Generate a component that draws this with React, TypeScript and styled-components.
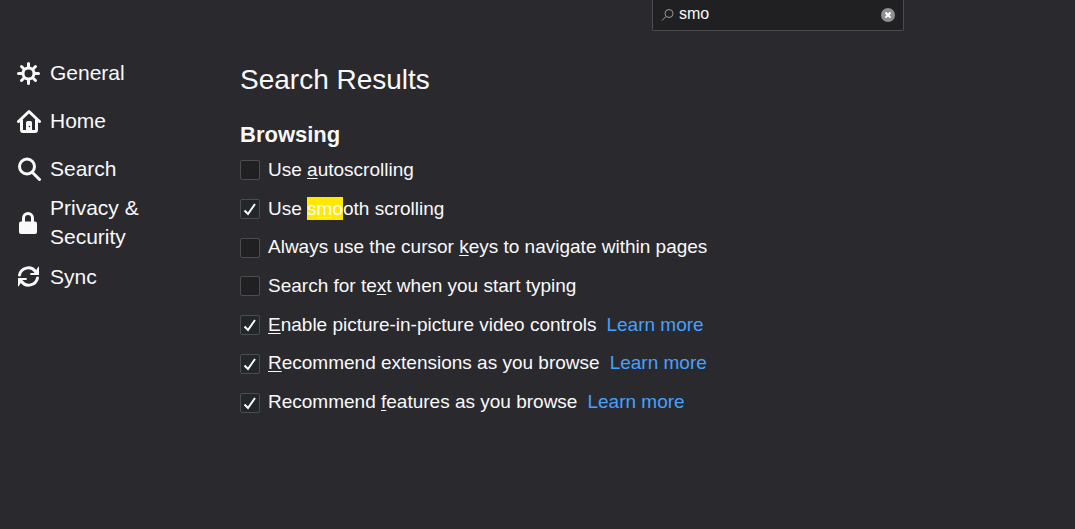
import React from "react";
import styled, { createGlobalStyle } from "styled-components";

const GlobalStyle = createGlobalStyle`
  * { box-sizing: border-box; }
  body {
    margin: 0;
    background: #2a2a2e;
    color: #f9f9fa;
    font-family: "Liberation Sans", Arial, sans-serif;
    font-size: 19px;
    line-height: 29px;
  }
`;

const Page = styled.div`
  display: grid;
  grid-template-columns: 160px minmax(0, 664px);
  column-gap: 80px;
`;

const Nav = styled.nav`
  display: flex;
  flex-direction: column;
  padding: 48px 0 0 17px;
`;

const NavItem = styled.a`
  display: flex;
  align-items: center;
  gap: 9px;
  min-height: 48px;
  padding: 1px 0;
  color: inherit;
  font-size: 21px;
  text-decoration: none;
`;

const NavIcon = styled.svg`
  flex: none;
  width: 24px;
  height: 26px;
  fill: none;
  stroke: #f9f9fa;
  stroke-width: 3;
  stroke-linecap: round;
  stroke-linejoin: round;
`;

const Main = styled.main`
  display: flex;
  flex-direction: column;
`;

const SearchBox = styled.div`
  display: flex;
  align-items: center;
  align-self: flex-end;
  width: 252px;
  max-width: 100%;
  height: 31px;
  padding: 0 8px;
  gap: 4px;
  background: #202022;
  border: 1px solid #4c4c4f;
  border-top: 0;
  border-radius: 0 0 2px 2px;
`;

const SearchInput = styled.input`
  flex: 1;
  min-width: 0;
  height: 24px;
  padding: 0 0 2px;
  border: 0;
  outline: 0;
  background: transparent;
  color: #f9f9fa;
  font: 16px "Liberation Sans", Arial, sans-serif;
`;

const ClearButton = styled.button`
  display: flex;
  padding: 0;
  border: 0;
  background: none;
`;

const Title = styled.h1`
  margin: 32px 0 0;
  font-size: 28px;
  font-weight: 400;
  line-height: 34px;
`;

const Section = styled.section`
  margin-top: 23px;
`;

const SectionTitle = styled.h2`
  margin: 0;
  font-size: 22px;
  line-height: 30px;
`;

const Options = styled.div`
  display: grid;
  grid-auto-rows: 1fr;
  min-height: 271px;
`;

const Option = styled.div`
  display: flex;
  align-items: center;
  gap: 10px;
`;

const OptionLabel = styled.label`
  display: flex;
  align-items: center;
  gap: 8px;
`;

const CheckWrap = styled.span`
  position: relative;
  display: flex;
  flex: none;
  margin-top: 2px;
`;

const CheckInput = styled.input`
  appearance: none;
  width: 20px;
  height: 20px;
  margin: 0;
  background: #202022;
  border: 1px solid #4c4c4f;
  border-radius: 2px;
  &:checked { background: #22272a; }
  & + svg { visibility: hidden; }
  &:checked + svg { visibility: visible; }
`;

const CheckMark = styled.svg`
  position: absolute;
  inset: 0;
  pointer-events: none;
`;

const AccessKey = styled.u`
  text-decoration-thickness: 1px;
  text-underline-offset: 2px;
  text-decoration-skip-ink: none;
`;

const Highlight = styled.mark`
  padding: 1px 0;
  background: #ffe900;
  color: inherit;
`;

const Link = styled.a`
  color: #45a1ff;
  text-decoration: none;
`;

const navItems: { label: string; icon: React.ReactNode }[] = [
  {
    label: "General",
    icon: (
      <>
        <circle cx="11.5" cy="12.5" r="5.5" />
        <path d="M11.5 2.5v3M11.5 19.5v3M1.5 12.5h3M18.5 12.5h3M4.5 5.5l2 2M16.5 17.5l2 2M18.5 5.5l-2 2M6.5 17.5l-2 2" />
      </>
    ),
  },
  {
    label: "Home",
    icon: (
      <>
        <path d="M1.5 12.5L12 2.5l10.5 10M4.5 11v10q0 1.5 1.5 1.5h12q1.5 0 1.5-1.5V11" />
        <path d="M9 22v-8.5q0-1.5 1.5-1.5h3q1.5 0 1.5 1.5V22z" fill="#f9f9fa" stroke="none" />
        <circle cx="12.5" cy="17.5" r="0.8" fill="#2a2a2e" stroke="none" />
      </>
    ),
  },
  {
    label: "Search",
    icon: <path d="M15.5 15.5L22.5 22.5M17.5 9.5a7.5 7.5 0 1 1-15 0a7.5 7.5 0 0 1 15 0z" />,
  },
  {
    label: "Privacy & Security",
    icon: (
      <>
        <rect x="2" y="10.500" width="18" height="12.500" rx="2" fill="#f9f9fa" stroke="none" />
        <path d="M6.5 12V7a4.500 4.500 0 0 1 9 0v5" />
      </>
    ),
  },
  {
    label: "Sync",
    icon: (
      <>
        <path d="M2.5 10a9 9 0 0 1 16-3.500M20.500 13a9 9 0 0 1-16 3.500" />
        <path d="M21.5 1.500q.5 0 .5.5v7.500q0 .5-.5.5h-7.500q-1.500-.3-.8-1.500q.5-.6 1.500-.5h2.500zM1.500 21.500q-.5 0-.5-.5v-7.500q0-.5.5-.5h7.500q1.500.3.8 1.500q-.5.6-1.500.5h-2.500z" fill="#f9f9fa" stroke="none" />
      </>
    ),
  },
];

const options: { id: string; text: React.ReactNode; checked?: boolean; more?: boolean }[] = [
  { id: "autoscroll", text: <>Use <AccessKey>a</AccessKey>utoscrolling</> },
  { id: "smooth", checked: true, text: <>Use <Highlight>s<AccessKey>m</AccessKey>o</Highlight>oth scrolling</> },
  { id: "cursor", text: <>Always use the cursor <AccessKey>k</AccessKey>eys to navigate within pages</> },
  { id: "typing", text: <>Search for te<AccessKey>x</AccessKey>t when you start typing</> },
  { id: "pip", checked: true, more: true, text: <><AccessKey>E</AccessKey>nable picture-in-picture video controls</> },
  { id: "extensions", checked: true, more: true, text: <><AccessKey>R</AccessKey>ecommend extensions as you browse</> },
  { id: "features", checked: true, more: true, text: <>Recommend <AccessKey>f</AccessKey>eatures as you browse</> },
];

export default function App() {
  return (
    <>
      <GlobalStyle />
      <Page>
        <Nav>
          {navItems.map((item) => (
            <NavItem href="#" key={item.label}>
              <NavIcon viewBox="0 -2 24 26" aria-hidden="true">{item.icon}</NavIcon>
              <span>{item.label}</span>
            </NavItem>
          ))}
        </Nav>
        <Main>
          <SearchBox>
            <svg width="14" height="14" viewBox="0 0 14 14" fill="none" stroke="#9a9a9c" aria-hidden="true">
              <circle cx="8" cy="5.5" r="4" />
              <path d="M5 8.5L1 12.5" />
            </svg>
            <SearchInput type="text" aria-label="Find in Preferences" defaultValue="smo" />
            <ClearButton type="button" aria-label="Clear">
              <svg width="14" height="14" viewBox="0 0 14 14">
                <circle cx="7" cy="7" r="7" fill="#8f8f91" />
                <path d="M4.5 4.5l5 5M9.5 4.5l-5 5" stroke="#fff" strokeWidth="2" />
              </svg>
            </ClearButton>
          </SearchBox>
          <Title>Search Results</Title>
          <Section>
            <SectionTitle>Browsing</SectionTitle>
            <Options>
              {options.map((o) => (
                <Option key={o.id}>
                  <OptionLabel>
                    <CheckWrap>
                      <CheckInput type="checkbox" defaultChecked={o.checked} />
                      <CheckMark width="20" height="20" viewBox="0 0 20 20" aria-hidden="true">
                        <path d="M4.5 11.5L8 15L15 5" fill="none" stroke="#fff" strokeWidth="2" />
                      </CheckMark>
                    </CheckWrap>
                    <span>{o.text}</span>
                  </OptionLabel>
                  {o.more && <Link href="#">Learn more</Link>}
                </Option>
              ))}
            </Options>
          </Section>
        </Main>
      </Page>
    </>
  );
}
